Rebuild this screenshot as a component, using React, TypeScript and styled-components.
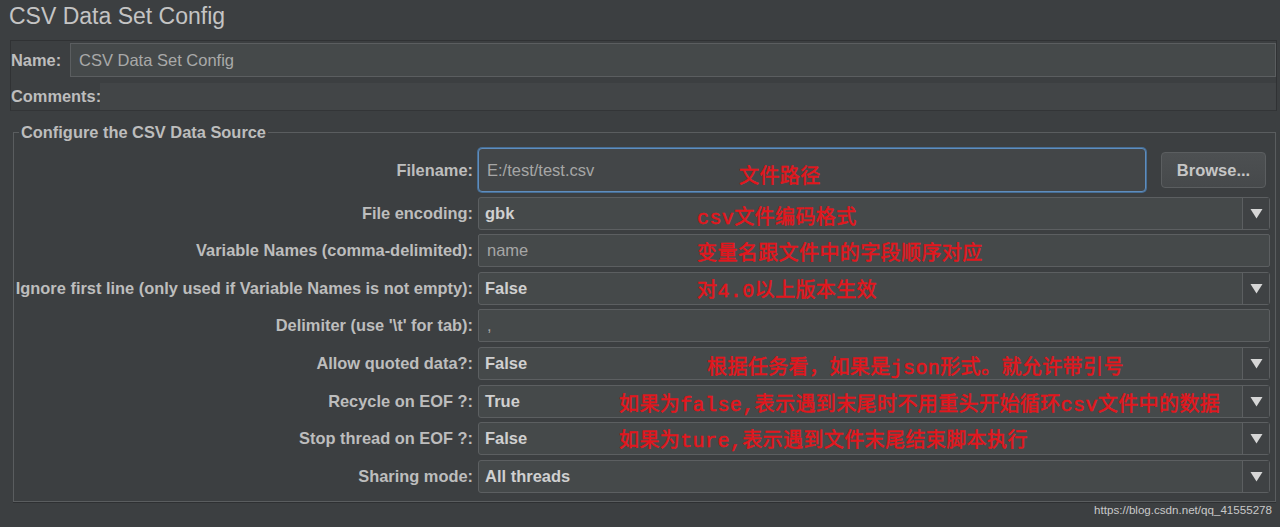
import styled, { createGlobalStyle } from "styled-components";

const GlobalStyle = createGlobalStyle`
  html, body {
    margin: 0;
    padding: 0;
    background: #3c3f41;
    height: 100%;
    overflow: hidden;
  }
  body {
    font-family: "Liberation Sans", Arial, sans-serif;
    color: #bbbbbb;
  }
`;

const Page = styled.div`
  width: 1280px;
  height: 527px;
  background: #3c3f41;
  display: flex;
  flex-direction: column;
`;

const Title = styled.h1`
  margin: 0;
  padding: 2px 0 0 9px;
  height: 40px;
  box-sizing: border-box;
  font-size: 23px;
  font-weight: normal;
  line-height: 28px;
  color: #c4c4c4;
`;

const NamePanel = styled.div`
  margin: 0 3px 0 10px;
  height: 71px;
  box-sizing: border-box;
  border: 1px solid #303234;
  border-bottom-color: #333537;
  display: flex;
  flex-direction: column;
  gap: 6px;
  padding-top: 2px;
`;

const NameRow = styled.div`
  display: flex;
  align-items: center;
  height: 34px;
`;

const PanelLabel = styled.span<{ $width: number }>`
  width: ${(p) => p.$width}px;
  flex: none;
  font-weight: bold;
  font-size: 16.4px;
  color: #bdbdbd;
`;

const NameInput = styled.div`
  flex: 1;
  height: 34px;
  box-sizing: border-box;
  border: 1px solid #5b5e60;
  background: #45494a;
  display: flex;
  align-items: center;
  padding-left: 8px;
  font-size: 16.5px;
  color: #a9a9a9;
`;

const CommentsRow = styled.div`
  display: flex;
  align-items: center;
  flex: 1;
`;

const CommentsArea = styled.div`
  flex: 1;
  align-self: stretch;
  background: #424547;
`;

const Group = styled.fieldset`
  position: relative;
  margin: 12px 4px 0 13px;
  padding: 7px 5px 8px 0;
  border: 1px solid #5a5d5f;
  box-shadow: 0 1px 0 #2e3032;
  display: grid;
  grid-template-columns: 459px 1fr;
  column-gap: 5px;
  row-gap: 4.6px;
  align-items: center;
`;

const Legend = styled.legend`
  margin-left: 5px;
  padding: 0 2px;
  font-weight: bold;
  font-size: 16.4px;
  line-height: 18px;
  color: #bdbdbd;
`;

const FieldLabel = styled.label`
  text-align: right;
  font-weight: bold;
  font-size: 16.4px;
  color: #bdbdbd;
  white-space: nowrap;
`;

const Control = styled.div<{ $tall?: boolean }>`
  position: relative;
  height: ${(p) => (p.$tall ? 44 : 33)}px;
  display: flex;
  align-items: center;
`;

const TextBox = styled.div<{ $focused?: boolean }>`
  flex: 1;
  height: 100%;
  box-sizing: border-box;
  border: 1px solid ${(p) => (p.$focused ? "#5f8dbd" : "#5c5f61")};
  box-shadow: ${(p) => (p.$focused ? "0 0 0 1px #466e96" : "none")};
  border-radius: ${(p) => (p.$focused ? 4 : 2)}px;
  background: ${(p) => (p.$focused ? "#434648" : "#45494a")};
  display: flex;
  align-items: center;
  padding-left: 8px;
  font-size: 16.5px;
  color: #a6a6a6;
`;

const Combo = styled.div`
  flex: 1;
  height: 100%;
  box-sizing: border-box;
  border: 1px solid #5c5f61;
  border-radius: 3px;
  background: #45494a;
  display: flex;
  align-items: stretch;
`;

const ComboValue = styled.div`
  flex: 1;
  display: flex;
  align-items: center;
  padding-left: 6px;
  font-weight: bold;
  font-size: 16.5px;
  color: #d0d0d0;
`;

const ArrowBox = styled.div`
  width: 26px;
  border-left: 1px solid #5c5f61;
  background: #3f4244;
  display: flex;
  align-items: center;
  justify-content: center;
`;

const BrowseButton = styled.button`
  margin: 0 4px 0 15px;
  width: 105px;
  height: 36px;
  box-sizing: border-box;
  border: 1px solid #5b5e60;
  border-radius: 4px;
  background: linear-gradient(#4d5052, #46494b);
  color: #c6c6c6;
  font-family: "Liberation Sans", Arial, sans-serif;
  font-weight: bold;
  font-size: 16.5px;
  padding: 0;
`;

const Note = styled.span<{ $left: number; $dy: number }>`
  position: absolute;
  left: ${(p) => p.$left}px;
  top: 50%;
  transform: translateY(calc(-50% + ${(p) => p.$dy}px));
  white-space: nowrap;
  pointer-events: none;
  font-family: "Liberation Mono", "Noto Sans CJK SC", monospace;
  font-size: 20px;
  letter-spacing: 0.4px;
  color: #e3161d;
  -webkit-text-stroke: 0.5px #e3161d;
`;

const Footer = styled.div`
  text-align: right;
  padding: 1px 8px 0 0;
  font-size: 11.6px;
  color: #c9c9c9;
`;

type Kind = "file" | "combo" | "text";

interface Row {
  label: string;
  kind: Kind;
  value: string;
  note?: { text: string; left: number; dy: number };
}

const rows: Row[] = [
  { label: "Filename:", kind: "file", value: "E:/test/test.csv", note: { text: "文件路径", left: 261, dy: 4 } },
  { label: "File encoding:", kind: "combo", value: "gbk", note: { text: "csv文件编码格式", left: 219, dy: 2 } },
  { label: "Variable Names (comma-delimited):", kind: "text", value: "name", note: { text: "变量名跟文件中的字段顺序对应", left: 219, dy: 0 } },
  { label: "Ignore first line (only used if Variable Names is not empty):", kind: "combo", value: "False", note: { text: "对4.0以上版本生效", left: 219, dy: 0 } },
  { label: "Delimiter (use '\\t' for tab):", kind: "text", value: "," },
  { label: "Allow quoted data?:", kind: "combo", value: "False", note: { text: "根据任务看，如果是json形式。就允许带引号", left: 229, dy: 2 } },
  { label: "Recycle on EOF ?:", kind: "combo", value: "True", note: { text: "如果为false,表示遇到末尾时不用重头开始循环csv文件中的数据", left: 141, dy: 1 } },
  { label: "Stop thread on EOF ?:", kind: "combo", value: "False", note: { text: "如果为ture,表示遇到文件末尾结束脚本执行", left: 141, dy: -1 } },
  { label: "Sharing mode:", kind: "combo", value: "All threads" },
];

const Arrow = () => (
  <svg width="13" height="11" viewBox="0 0 13 11">
    <polygon points="0.5,1 12.5,1 6.5,10.5" fill="#d6d6d6" />
  </svg>
);

function renderControl(row: Row) {
  switch (row.kind) {
    case "file":
      return (
        <>
          <TextBox $focused>{row.value}</TextBox>
          <BrowseButton>Browse...</BrowseButton>
        </>
      );
    case "combo":
      return (
        <Combo>
          <ComboValue>{row.value}</ComboValue>
          <ArrowBox>
            <Arrow />
          </ArrowBox>
        </Combo>
      );
    default:
      return <TextBox>{row.value}</TextBox>;
  }
}

export default function App() {
  return (
    <Page>
      <GlobalStyle />
      <Title>CSV Data Set Config</Title>
      <NamePanel>
        <NameRow>
          <PanelLabel $width={59}>Name:</PanelLabel>
          <NameInput>CSV Data Set Config</NameInput>
        </NameRow>
        <CommentsRow>
          <PanelLabel $width={89}>Comments:</PanelLabel>
          <CommentsArea />
        </CommentsRow>
      </NamePanel>
      <Group>
        <Legend>Configure the CSV Data Source</Legend>
        {rows.map((row, index) => (
          <>
            <FieldLabel key={"l" + index}>{row.label}</FieldLabel>
            <Control key={"c" + index} $tall={row.kind === "file"}>
              {renderControl(row)}
              {row.note && (
                <Note $left={row.note.left} $dy={row.note.dy}>
                  {row.note.text}
                </Note>
              )}
            </Control>
          </>
        ))}
      </Group>
      <Footer>https://blog.csdn.net/qq_41555278</Footer>
    </Page>
  );
}
